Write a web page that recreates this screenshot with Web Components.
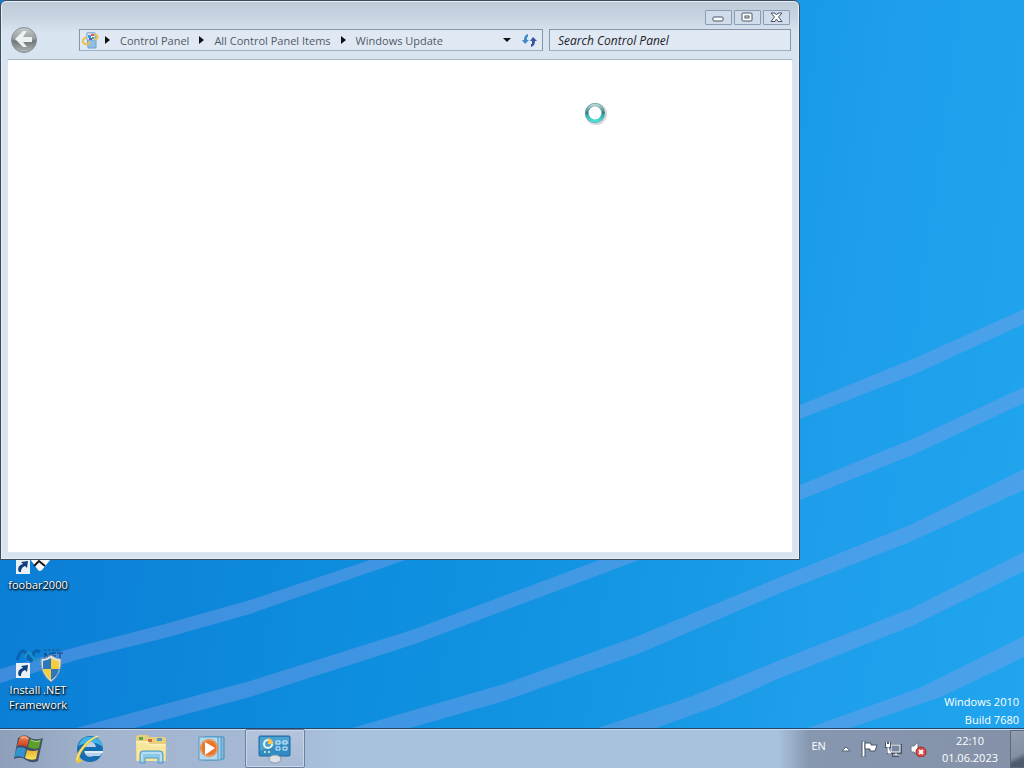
<!DOCTYPE html>
<html lang="en">
<head>
<meta charset="utf-8">
<title>Windows Update</title>
<style>
  html, body { height: 100%; margin: 0; }
  body {
    font-family: "Open Sans", "Noto Sans", sans-serif;
    font-size: 11px;
    line-height: 15px;
    overflow: hidden;
  }
</style>
</head>
<body>
<desk-top>
  <desktop-icon slot="icons" label="foobar2000" kind="foobar"></desktop-icon>
  <desktop-icon slot="icons" label="Install .NET Framework" kind="dotnet"></desktop-icon>
  <explorer-window slot="windows">
    <crumb-bar slot="nav" path="Control Panel|All Control Panel Items|Windows Update"></crumb-bar>
    <search-box slot="nav" hint="Search Control Panel"></search-box>
  </explorer-window>
  <span slot="mark">Windows 2010</span>
  <span slot="mark">Build 7680</span>
  <task-bar slot="bar">
    <task-button icon="start" name="Start"></task-button>
    <task-button icon="ie" name="Internet Explorer"></task-button>
    <task-button icon="folder" name="Windows Explorer"></task-button>
    <task-button icon="media" name="Windows Media Player"></task-button>
    <task-button icon="panel" name="Control Panel" active></task-button>
    <system-tray slot="tray" lang-code="EN" time="22:10" date="01.06.2023"></system-tray>
  </task-bar>
</desk-top>

<script>
const arrow = `<rect width="14" height="15" fill="#e9f1f8"/>
  <path d="M3 13C1 9 3 6 7 5L5 3l7-1-1 7-2-2c-3 1-4 3-4 6z" fill="#123f7d"/>`;

const icons = {
  foobar: `<svg width="48" height="48" viewBox="0 0 48 48">
    <path d="M9 24 25 8 41 24Q42 28 37 34L28 45Q26 47 24 45L16 34z" fill="#f7f8fa"/>
    <path d="M20 41 25 36 31 41" fill="none" stroke="#151515" stroke-width="2"/>
    <g transform="translate(2 34)">${arrow}</g></svg>`,
  dotnet: `<svg width="48" height="48" viewBox="0 0 48 48">
    <path d="M3 30Q8 15 13 25T18 28Q20 18 26 22" fill="none" stroke="#0b62ad" stroke-width="3"/>
    <path d="M11 28Q14 18 18 26T26 28" fill="none" stroke="#2191c6" stroke-width="2"/>
    <path d="M30 20h17" stroke="#2a5488" stroke-dasharray="3 1"/>
    <path d="M31 30v-7l5 7v-7M42 23h-4v7M38 26h4M43 23h6M46 23v7" fill="none" stroke="#173c72"/>
    <path d="M27 29Q32 29 37 25 42 29 47 29 48 44 37 52 26 44 27 29z" fill="#dce4ea" stroke="#8397a8"/>
    <path d="M29 31Q34 30 37 28v11h-8z" fill="#2e77bd"/><path d="M37 28Q41 31 45 31v8h-8z" fill="#f6ce3d"/>
    <path d="M29 39h8v11Q31 46 29 39z" fill="#f6ce3d"/><path d="M37 39h8Q44 46 37 50z" fill="#2e77bd"/>
    <g transform="translate(2 33)">${arrow}</g></svg>`,
  start: `<svg width="34" height="34" viewBox="0 0 34 34">
    <defs>
      <linearGradient id="r" x2="0" y2="1"><stop stop-color="#ee8b57"/><stop offset="1" stop-color="#ce3917"/></linearGradient>
      <linearGradient id="y" x2="0" y2="1"><stop stop-color="#e9b02c"/><stop offset="1" stop-color="#fae45f"/></linearGradient>
    </defs>
    <path d="M6 6Q12 1 17 5Q22 9 31 6L26 29Q20 32 14 28Q9 24 2 27z" fill="#26344b" opacity=".75"/>
    <path d="M8 5Q13 2 17 6L15 15Q10 12 5 14z" fill="url(#r)"/>
    <path d="M18 7Q24 10 29 7L27 16Q22 18 16 15z" fill="#5d9e2c"/>
    <path d="M5 16Q10 14 14 17L12 26Q8 23 2 25z" fill="#3293cf"/>
    <path d="M15 18Q21 20 26 18L24 27Q19 29 13 26z" fill="url(#y)"/>
    <path d="M9 6q4-2 7 1M19 8q5 3 9 1" fill="none" stroke="#fff" opacity=".5"/></svg>`,
  ie: `<svg width="34" height="34" viewBox="0 0 34 34">
    <circle cx="18" cy="17" r="13" fill="#176db1"/>
    <path d="M6 14Q10 3 20 5q9 1 11 10Q22 7 6 14z" fill="#41b4e6"/>
    <path d="M12 15Q13 10 18 10t6 5zM12 19h19q-1 3-3 5h-6q-8 3-10-5z" fill="#b9d2e7"/>
    <path d="M13 19h18v2H13z" fill="#d9ecf7"/>
    <path d="M27 4C17 4 2 21 4 30c2 2 5 0 7-2-10 2 4-19 16-24z" fill="#eac83f"/>
    <path d="M26 4C15 7 6 20 5 28" fill="none" stroke="#fff2a0"/></svg>`,
  folder: `<svg width="34" height="34" viewBox="0 0 34 34">
    <path d="M2 6Q2 3 5 3h8l2 2h15q2 0 2 3v21H2z" fill="#e8cf7c"/>
    <path d="M5 5h4v3H5z" fill="#57a44b"/><path d="M14 7h4v3h-4z" fill="#db6547"/><path d="M23 6h5v3h-5z" fill="#579cc7"/>
    <path d="M2 9h12l2 3h16l-1 17H3z" fill="#f8e69d"/>
    <path d="M3 10h10l3 3h15" fill="none" stroke="#fff8c9"/>
    <path d="M6 31V22q0-3 3-3h17q3 0 3 3v9h-5v-5H11v5z" fill="#8cc8e8" stroke="#5599c4"/>
    <path d="M8 21h19M8 22v7M27 22v7" stroke="#dcf5ff"/></svg>`,
  media: `<svg width="34" height="34" viewBox="0 0 34 34">
    <path d="M10 5h18v22H10z" fill="#82b8dc" stroke="#488bb9"/><path d="M7 5h18v23H7z" fill="#a8d2e8" stroke="#4d98c6"/>
    <path d="M3 5h19v23H3z" fill="#b5d7ec" stroke="#5b9bc4"/>
    <circle cx="13" cy="16" r="9" fill="#e7762c"/><circle cx="13" cy="16" r="8" fill="none" stroke="#f3a467"/>
    <path d="m9 10 10 6-10 7z" fill="#fff"/></svg>`,
  panel: `<svg width="34" height="34" viewBox="0 0 34 34">
    <rect x="1" y="4" width="31" height="20" rx="1" fill="#318bc4" stroke="#2569a0"/>
    <path d="M2 5h29v7Q16 13 2 19z" fill="#63b6df" opacity=".55"/>
    <circle cx="10" cy="12" r="4" fill="none" stroke="#e9f4e8" stroke-width="2"/><path d="M10 12V6a6 6 0 0 1 5 6z" fill="#f6c551"/>
    <g fill="none" stroke="#d7f0fc"><path d="M18 9h4v3h-4zM25 9h4v3h-4zM18 15h4v3h-4zM25 15h4v3h-4z"/></g>
    <path d="M6 20h2M10 20h2" stroke="#bce0b5" stroke-width="2"/>
    <path d="M11 25q6-3 12 0v2H11z" fill="#567e9e"/><ellipse cx="17" cy="27" rx="6" ry="4" fill="#dae0e4" stroke="#8c9ba8"/></svg>`
};

class DeskTop extends HTMLElement {
  constructor() {
    super();
    this.attachShadow({ mode: "open" }).innerHTML = `
      <style>
        :host { display: flex; flex-direction: column; height: 100vh; }
        .area {
          position: relative; flex: 1; min-height: 0; overflow: hidden;
          display: flex; justify-content: space-between; align-items: flex-end;
          background: linear-gradient(98deg, #0b7dd5 5%, #0e8ede 40%, #1497e4 64%, #1e9eeb 80%, #20a5ee);
        }
        .wall { position: absolute; inset: 0; width: 100%; height: 100%; }
        .icons { position: relative; display: flex; flex-direction: column; gap: 23px; width: 76px; padding-bottom: 16px; }
        .mark { position: relative; display: flex; flex-direction: column; align-items: flex-end; gap: 3px; padding: 0 5px 1px 0; color: #fff; }
      </style>
      <div class="area">
        <svg class="wall" viewBox="0 0 1024 728" preserveAspectRatio="none" fill="#82a0e8" fill-opacity=".42">
          <path d="M0 669 80 646 165 624 250 600 373 559 600 484 800 405 915 358 1024 309V324L915 374 800 419 600 499 408 559 250 614 165 638 80 659 0 683z"/>
          <path d="M76 728 250 681 415 629 602 559 800 485 915 438 1024 387V403L915 454 800 500 642 559 415 644 250 697 134 728z"/>
          <path d="M352 728 504 684 638 636 780 577 910 525 1024 469V490L910 542 780 593 638 654 504 701 410 728z"/>
          <path d="M598 728 690 697 780 660 912 608 1024 552V571L912 626 780 678 720 705 656 728z"/>
          <path d="M808 728 917 689 1024 636V657L941 697 850 728z"/>
        </svg>
        <div class="icons"><slot name="icons"></slot></div>
        <div class="mark"><slot name="mark"></slot></div>
        <slot name="windows"></slot>
      </div>
      <slot name="bar"></slot>
    `;
  }
}

class DesktopIcon extends HTMLElement {
  constructor() {
    super();
    this.attachShadow({ mode: "open" });
  }

  connectedCallback() {
    this.shadowRoot.innerHTML = `
      <style>
        :host { display: block; }
        button {
          display: flex; flex-direction: column; align-items: center; gap: 4px;
          width: 100%; min-height: 82px; padding: 0; border: 0; background: none;
          font: inherit; color: #fff; text-shadow: 1px 1px 2px #000, 0 1px 2px #000;
        }
        svg { display: block; overflow: visible; }
      </style>
      <button>${icons[this.getAttribute("kind")]}<span>${this.getAttribute("label")}</span></button>
    `;
  }
}

class ExplorerWindow extends HTMLElement {
  constructor() {
    super();
    this.attachShadow({ mode: "open" }).innerHTML = `
      <style>
        :host {
          position: absolute; top: 0; left: 0;
          display: flex; flex-direction: column; box-sizing: border-box;
          width: calc(100% - 224px); height: calc(100% - 168px);
          padding: 0 6px 6px; border: 1px solid #3e4b5c; border-radius: 6px 6px 0 0;
          background: linear-gradient(#bdcad7, #c8d4e1 16px, #d8e4f0 32px, #d8e4f0);
          box-shadow: inset 0 0 0 1px #e6eff7;
        }
        .caption { display: flex; justify-content: flex-end; gap: 2px; height: 24px; padding: 9px 3px 0; box-sizing: border-box; }
        .caption button { display: grid; place-items: center; width: 27px; height: 15px; padding: 0; border: 1px solid #8b9cb5; border-radius: 1px; background: #d0dce9; }
        .nav { display: flex; align-items: center; gap: 6px; height: 30px; padding: 0 2px 4px 3px; }
        .back { width: 28px; height: 28px; margin-right: 35px; padding: 0; border: 0; background: none; }
        svg { display: block; }
        main { flex: 1; position: relative; border: 1px solid #dce6f0; border-top-color: #a8b4c6; background: #fff; }
        .busy { position: absolute; left: 73.4%; top: 41px; }
      </style>
      <div class="caption">
        <button aria-label="Minimize"><svg width="13" height="11"><rect x="1" y="5" width="10" height="4" rx="1" fill="#fff" stroke="#465469"/></svg></button>
        <button aria-label="Maximize"><svg width="13" height="11" fill="#fff" stroke="#465469"><rect x="1" y="1" width="10" height="8" rx="1"/><rect x="4" y="4" width="4" height="2"/></svg></button>
        <button aria-label="Close"><svg width="13" height="11"><path d="M1 1h4l1.500 2L8 1h4L8.500 5 12 9.500H8L6.500 7 5 9.500H1L4.500 5z" fill="#fff" stroke="#465469"/></svg></button>
      </div>
      <div class="nav">
        <button class="back" aria-label="Back"><svg width="28" height="28" viewBox="0 0 28 28">
          <defs><linearGradient id="g" x2="0" y2="1"><stop stop-color="#c6cbce"/><stop offset=".45" stop-color="#989e9f"/><stop offset=".55" stop-color="#6f7677"/><stop offset="1" stop-color="#b1bab8"/></linearGradient></defs>
          <circle cx="14" cy="14" r="12.500" fill="url(#g)" stroke="#868e94"/>
          <path d="M5 13 13 5h4l-4 6h9v5h-9l4 5h-4z" fill="#eef1f2"/></svg></button>
        <slot name="nav"></slot>
      </div>
      <main>
        <svg class="busy" width="26" height="26" viewBox="0 0 26 26">
          <defs><linearGradient id="b" x2="0" y2="1"><stop stop-color="#b4d3d0"/><stop offset=".5" stop-color="#2f7a83"/><stop offset=".6" stop-color="#35a8a8"/><stop offset="1" stop-color="#4ce2d3"/></linearGradient></defs>
          <circle cx="13" cy="13" r="9" fill="none" stroke="#a7aeb6" stroke-width="4" opacity=".5"/>
          <circle cx="12" cy="12" r="8" fill="none" stroke="#4b949a" stroke-width="4"/>
          <circle cx="12" cy="12" r="8" fill="#fff" stroke="url(#b)" stroke-width="3"/></svg>
      </main>
    `;
  }
}

class CrumbBar extends HTMLElement {
  constructor() {
    super();
    this.attachShadow({ mode: "open" });
  }

  connectedCallback() {
    const tri = `<svg width="5" height="8"><path d="M0 0 5 4 0 8z" fill="#111"/></svg>`;
    const parts = this.getAttribute("path").split("|").map(p => `${tri}<a href="#">${p}</a>`).join("");
    this.shadowRoot.innerHTML = `
      <style>
        :host { display: flex; align-items: center; box-sizing: border-box; flex: 458; min-width: 0; height: 22px; border: 1px solid #8795ab; border-bottom-color: #9fb0c5; background: #e0e9f3; padding: 0 2px; }
        nav { display: flex; align-items: center; flex: 1; gap: 10px; padding-left: 6px; }
        a { color: #4f5a66; text-decoration: none; white-space: nowrap; }
        button { display: grid; place-items: center; width: 22px; height: 20px; padding: 0; border: 0; background: none; }
        svg { display: block; }
      </style>
      <svg width="17" height="17" viewBox="0 0 17 17">
        <path d="M5 1h8l1 3v12H6z" fill="#8fc0e4" stroke="#6da3cd"/><path d="M5 1h8v7H5z" fill="#eef7fe" stroke="#7fa8cc"/>
        <path d="M6 3h3v3H6z" fill="#3b9ad8"/><path d="M9 2h3v2H9z" fill="#e45a4a"/><path d="M10 5h2v2h-2z" fill="#55a651"/><path d="M7 6h3v2H7z" fill="#6a59c3"/>
        <path d="M13 2q5 3 0 6M4 5Q-2 9 3 12q3 1 5-2" fill="none" stroke="#edc04c" stroke-width="2"/></svg>
      <nav aria-label="Address">${parts}</nav>
      <button aria-label="Previous locations"><svg width="8" height="5"><path d="M0 0h8L4 4z" fill="#111"/></svg></button>
      <button aria-label="Refresh"><svg width="15" height="15" viewBox="0 0 15 15"><path d="M6 1v3H5v3h2l-4 4-3-4h2Q2 2 6 1z" fill="#4488c7"/><path d="M9 14v-3h1V8H8l3-4 4 4h-2q0 5-4 6z" fill="#37549e"/></svg></button>
    `;
  }
}

class SearchBox extends HTMLElement {
  constructor() {
    super();
    this.attachShadow({ mode: "open" });
  }

  connectedCallback() {
    this.shadowRoot.innerHTML = `
      <style>
        :host { display: block; flex: 242; min-width: 0; }
        input { display: block; box-sizing: border-box; width: 100%; height: 22px; padding: 0 8px; border: 1px solid #8795ab; border-bottom-color: #9fb0c5; border-radius: 0; background: #e0e9f3; font: inherit; font-size: 12px; font-style: italic; }
        input::placeholder { color: #1b222b; opacity: 1; }
      </style>
      <input type="text" aria-label="${this.getAttribute("hint")}" placeholder="${this.getAttribute("hint")}">
    `;
  }
}

class TaskBar extends HTMLElement {
  constructor() {
    super();
    this.attachShadow({ mode: "open" }).innerHTML = `
      <style>
        :host {
          position: relative; display: flex; align-items: stretch; justify-content: space-between;
          box-sizing: border-box; height: 40px; border-top: 1px solid #24466d; box-shadow: inset 0 1px #c4dcee;
          background: linear-gradient(90deg, #8e9fba, #a3b4ce 10%, #a5bad6 28%, #a8c1dd 33%, #a8c1dd 76%, #8797b0 79%, #8491a8);
        }
        .apps { display: flex; gap: 2px; }
      </style>
      <div class="apps"><slot></slot></div>
      <slot name="tray"></slot>
    `;
  }
}

class TaskButton extends HTMLElement {
  constructor() {
    super();
    this.attachShadow({ mode: "open" });
  }

  connectedCallback() {
    this.shadowRoot.innerHTML = `
      <style>
        :host { display: flex; width: 60px; }
        :host(:first-child) { width: 57px; }
        button { flex: 1; display: grid; place-items: center; box-sizing: border-box; padding: 0; border: 1px solid transparent; background: none; }
        :host([active]) button { border-color: #6d7f9d; border-radius: 2px; background: linear-gradient(#b4c4dc, #a7bad5); box-shadow: inset 0 0 0 1px #c8d6e8; }
        svg { display: block; }
      </style>
      <button aria-label="${this.getAttribute("name")}">${icons[this.getAttribute("icon")]}</button>
    `;
  }
}

class SystemTray extends HTMLElement {
  constructor() {
    super();
    this.attachShadow({ mode: "open" });
  }

  connectedCallback() {
    this.shadowRoot.innerHTML = `
      <style>
        :host { display: flex; align-items: center; color: #fff; }
        button { display: grid; place-items: center; padding: 0; border: 0; background: none; font: inherit; color: inherit; }
        .lang { margin: 0 8px 6px 0; }
        .tray { width: 24px; height: 38px; }
        .clock { padding: 0 12px; line-height: 17px; }
        .peek { align-self: stretch; width: 14px; margin-top: 1px; border: 1px solid #59687d; border-right: 0; background: linear-gradient(155deg, #929eb2, #8390a4 65%, #4f5b6d 80%); }
        svg { display: block; }
      </style>
      <button class="lang">${this.getAttribute("lang-code")}</button>
      <button class="tray" aria-label="Show hidden icons"><svg width="10" height="6"><path d="M1 5 5 1l4 4z" fill="#fff" stroke="#566378"/></svg></button>
      <button class="tray" aria-label="Action Center"><svg width="18" height="16" viewBox="0 0 18 16"><path d="M1 0h3v16H1z" fill="#fff" stroke="#475468"/><path d="M4 2h6v2h6l-2 6H9V8H4z" fill="#fff" stroke="#475468"/></svg></button>
      <button class="tray" aria-label="Network"><svg width="18" height="16" viewBox="0 0 18 16"><path d="M5 3h12v10h-3v3H7v-3H4z" fill="#475468"/><rect x="6" y="4" width="9" height="7" fill="#7888a0" stroke="#fff"/><path d="M8 14h6M11 12v2" stroke="#fff"/><path d="M0 1h6v6H4v5h3v1H2V7H0z" fill="#475468"/><path d="M1 3h4v3H1zM1 1h1v3H1zM4 1h1v3H4zM3 6v6h3" fill="#fff" stroke="none"/><path d="M3 6v6h3" fill="none" stroke="#fff"/></svg></button>
      <button class="tray" aria-label="Volume"><svg width="18" height="16" viewBox="0 0 18 16"><path d="M2 5h3l4-4v14l-4-4H2z" fill="#fff" stroke="#68768a"/><circle cx="12" cy="11" r="5" fill="#d94a42" stroke="#a12c28"/><path d="m10 9 4 4M14 9l-4 4" stroke="#fff" stroke-width="2"/></svg></button>
      <button class="clock"><span>${this.getAttribute("time")}</span><span>${this.getAttribute("date")}</span></button>
      <button class="peek" aria-label="Show desktop"></button>
    `;
  }
}

customElements.define("desk-top", DeskTop);
customElements.define("desktop-icon", DesktopIcon);
customElements.define("explorer-window", ExplorerWindow);
customElements.define("crumb-bar", CrumbBar);
customElements.define("search-box", SearchBox);
customElements.define("task-bar", TaskBar);
customElements.define("task-button", TaskButton);
customElements.define("system-tray", SystemTray);
</script>
</body>
</html>
